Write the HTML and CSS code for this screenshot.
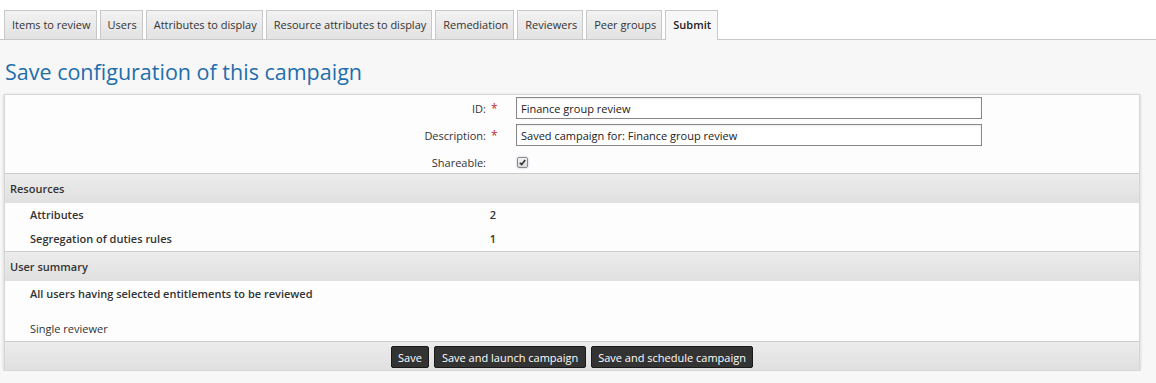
FILE: index.html
```html
<!DOCTYPE html>
<html lang="en">
<head>
    <meta charset="UTF-8">
    <meta name="viewport" content="width=device-width, initial-scale=1.0">
    <title>Campaign - Submit</title>
    <link rel="stylesheet" href="styles.css">
</head>
<body>
    <nav class="tabs">
        <a href="#items" class="tab">Items to review</a>
        <a href="#users" class="tab">Users</a>
        <a href="#attributes" class="tab">Attributes to display</a>
        <a href="#resource-attributes" class="tab">Resource attributes to display</a>
        <a href="#remediation" class="tab">Remediation</a>
        <a href="#reviewers" class="tab">Reviewers</a>
        <a href="#peer-groups" class="tab">Peer groups</a>
        <a href="#submit" class="tab active">Submit</a>
    </nav>

    <main class="content">
        <h1>Save configuration of this campaign</h1>

        <div class="panel">
            <form class="form-grid" id="saveForm">
                <label for="campaignId">ID:</label>
                <span class="required">*</span>
                <input type="text" id="campaignId" value="Finance group review">

                <label for="campaignDesc">Description:</label>
                <span class="required">*</span>
                <input type="text" id="campaignDesc" value="Saved campaign for: Finance group review">

                <label for="shareable">Shareable:</label>
                <span></span>
                <label class="check-cell" for="shareable">
                    <input type="checkbox" id="shareable" checked>
                    <span class="check-box">
                        <svg width="7" height="7" viewBox="0 0 7 7"><path d="M0.8 3.8 L2.6 5.6 L6.2 0.9" fill="none" stroke="#333" stroke-width="1.6"/></svg>
                    </span>
                </label>
            </form>

            <div class="section-header">Resources</div>
            <div class="summary">
                <div class="summary-row">
                    <span class="summary-name">Attributes</span>
                    <span class="summary-value">2</span>
                </div>
                <div class="summary-row">
                    <span class="summary-name">Segregation of duties rules</span>
                    <span class="summary-value">1</span>
                </div>
            </div>

            <div class="section-header">User summary</div>
            <div class="user-summary">
                <p class="strong">All users having selected entitlements to be reviewed</p>
                <p class="reviewer">Single reviewer</p>
            </div>

            <div class="button-bar">
                <button type="submit" form="saveForm">Save</button>
                <button type="button">Save and launch campaign</button>
                <button type="button">Save and schedule campaign</button>
            </div>
        </div>
    </main>

    <script>
        const shareable = document.getElementById('shareable');
        shareable.addEventListener('change', () => {
            document.querySelector('.check-box svg').style.visibility = shareable.checked ? 'visible' : 'hidden';
        });
    </script>
</body>
</html>
```

FILE: styles.css
```css
body {
    font-family: "Open Sans", "Liberation Sans", sans-serif;
    font-size: 11px;
    color: #333;
    background-color: #f7f7f7;
    margin: 0;
    padding: 0;
}
.tabs {
    display: flex;
    gap: 3px;
    padding: 10px 4px 0;
    background-color: #fff;
    border-bottom: 1px solid #c8c8c8;
    height: 29px;
}
.tab {
    display: block;
    padding: 6px 5px 0 7px;
    height: 22px;
    border: 1px solid #c8c8c8;
    border-bottom: none;
    background: linear-gradient(#f2f2f2, #e2e2e2);
    color: #333;
    text-decoration: none;
}
.tab.active {
    background: #f7f7f7;
    font-weight: 600;
    height: 23px;
    padding: 6px 6px 0 7px;
    color: #222;
}
.content {
    padding: 0 4px;
    width: 1136px;
}
h1 {
    font-size: 21.5px;
    font-weight: normal;
    color: #1f6eab;
    margin: 19px 0 9px 1px;
    line-height: 26px;
}
.panel {
    background-color: #fdfdfd;
    border: 1px solid #d6d6d6;
    box-shadow: 0 1px 3px rgba(0,0,0,0.2);
}
.form-grid {
    display: grid;
    grid-template-columns: 481px 30px 466px;
    row-gap: 5px;
    padding: 2px 0 0;
    align-items: center;
}
.form-grid label {
    text-align: right;
}
.required {
    color: #c0282d;
    padding-left: 5px;
    font-size: 12px;
}
.form-grid input[type="text"] {
    font-family: inherit;
    font-size: 11px;
    color: #222;
    height: 22px;
    box-sizing: border-box;
    border: 1px solid #888;
    padding: 2px 4px;
    margin: 0;
    box-shadow: inset 0 1px 2px rgba(0,0,0,0.08);
}
.check-cell {
    height: 22px;
    display: flex;
    align-items: center;
    padding-left: 1px;
}
.check-cell input {
    display: none;
}
.check-box {
    width: 9px;
    height: 9px;
    border: 1px solid #8a8a8a;
    border-radius: 2px;
    background: linear-gradient(#f4f4f4, #d8d8d8);
    box-shadow: 0 0 2px rgba(90,120,170,0.5);
    display: flex;
    align-items: center;
    justify-content: center;
}
.section-header {
    border-top: 1px solid #ccc;
    height: 29px;
    line-height: 29px;
    padding-left: 5px;
    font-weight: 600;
    background: linear-gradient(#ececec, #e0e0e0);
}
.summary-row {
    display: grid;
    grid-template-columns: 465px 26px;
    height: 24px;
    line-height: 24px;
    font-weight: 600;
}
.summary-name {
    padding-left: 25px;
}
.summary-value {
    text-align: right;
}
.user-summary {
    padding: 3px 0 2px 25px;
}
.user-summary p {
    margin: 0;
    line-height: 20px;
}
.strong {
    font-weight: 600;
}
.reviewer {
    margin-top: 15px !important;
}
.button-bar {
    display: flex;
    justify-content: center;
    gap: 5px;
    border-top: 1px solid #ccc;
    padding: 4px 0 2px;
    background: linear-gradient(#ececec, #e0e0e0);
}
button {
    font-family: inherit;
    font-size: 11px;
    color: #fff;
    background-color: #333;
    border: 1px solid #1a1a1a;
    border-radius: 2px;
    height: 22px;
    padding: 0 6.5px;
    cursor: pointer;
}
button:hover {
    background-color: #222;
}
```
